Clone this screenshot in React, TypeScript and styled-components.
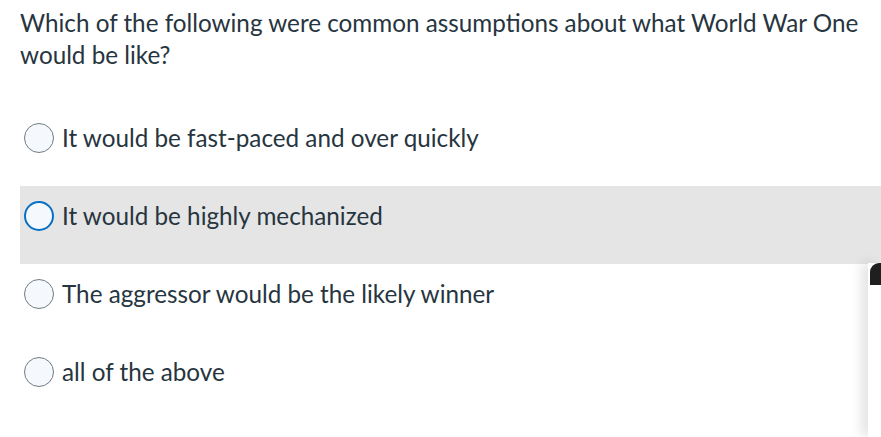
import React from "react";
import styled, { createGlobalStyle } from "styled-components";

const GlobalStyle = createGlobalStyle`
  html, body {
    margin: 0;
    padding: 0;
    background: #ffffff;
  }
  body {
    font-family: Lato, "Open Sans", sans-serif;
    color: #273540;
    overflow: hidden;
  }
`;

const answers = [
  { id: 1, text: "It would be fast-paced and over quickly", active: false },
  { id: 2, text: "It would be highly mechanized", active: true },
  { id: 3, text: "The aggressor would be the likely winner", active: false },
  { id: 4, text: "all of the above", active: false },
];

export default function App() {
  return (
    <>
      <GlobalStyle />
      <Page>
        <Question>
          Which of the following were common assumptions about what World War
          One would be like?
        </Question>
        <AnswerList>
          {answers.map((answer) => (
            <AnswerRow key={answer.id} $active={answer.active}>
              <Radio $active={answer.active} />
              <AnswerText>{answer.text}</AnswerText>
            </AnswerRow>
          ))}
        </AnswerList>
      </Page>
      <SideWidget>
        <WidgetHeader />
        <WidgetBody />
      </SideWidget>
    </>
  );
}

const Page = styled.div`
  padding: 7px 0 0 20px;
  height: 430px;
`;

const Question = styled.p`
  margin: 0;
  font-size: 24.25px;
  line-height: 32px;
  padding-right: 4px;
`;

const AnswerList = styled.div`
  margin-top: 37px;
  display: flex;
  flex-direction: column;
`;

const AnswerRow = styled.div<{ $active: boolean }>`
  display: flex;
  align-items: center;
  gap: 8px;
  height: 30px;
  padding: 15px 0 33px 4px;
  background: ${(p) => (p.$active ? "#e5e5e5" : "transparent")};
`;

const Radio = styled.span<{ $active: boolean }>`
  box-sizing: border-box;
  width: 30px;
  height: 30px;
  border-radius: 50%;
  flex-shrink: 0;
  background: #f5f8fd;
  border: ${(p) => (p.$active ? "2.5px solid #0770c4" : "1px solid #6f7b85")};
`;

const AnswerText = styled.span`
  font-size: 24.25px;
  line-height: 30px;
`;

const SideWidget = styled.div`
  position: absolute;
  top: 263px;
  right: 0;
  width: 13px;
  bottom: 0;
  display: flex;
  flex-direction: column;
  background: #ffffff;
  box-shadow: -6px 0 12px rgba(0, 0, 0, 0.12);
`;

const WidgetHeader = styled.div`
  height: 22px;
  margin-left: 2px;
  background: #1f1f1f;
  border-top-left-radius: 9px;
`;

const WidgetBody = styled.div`
  flex: 1;
  background: #ffffff;
`;
